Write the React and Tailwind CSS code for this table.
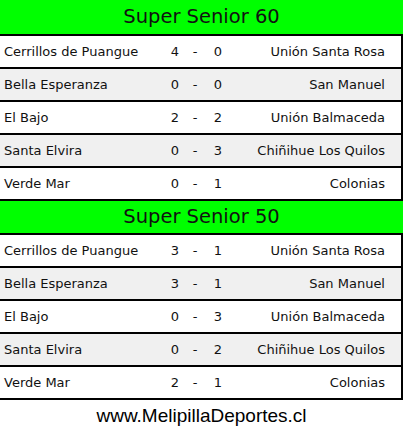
import React from "react";

const sections = [
  {
    title: "Super Senior 60",
    h: "h-[36px]",
    rows: [
      ["Cerrillos de Puangue", "4", "0", "Unión Santa Rosa"],
      ["Bella Esperanza", "0", "0", "San Manuel"],
      ["El Bajo", "2", "2", "Unión Balmaceda"],
      ["Santa Elvira", "0", "3", "Chiñihue Los Quilos"],
      ["Verde Mar", "0", "1", "Colonias"],
    ],
  },
  {
    title: "Super Senior 50",
    h: "h-[34px]",
    rows: [
      ["Cerrillos de Puangue", "3", "1", "Unión Santa Rosa"],
      ["Bella Esperanza", "3", "1", "San Manuel"],
      ["El Bajo", "0", "3", "Unión Balmaceda"],
      ["Santa Elvira", "0", "2", "Chiñihue Los Quilos"],
      ["Verde Mar", "2", "1", "Colonias"],
    ],
  },
];

export default function App() {
  return (
    <div className="w-[403px] h-[432px] bg-white text-[#111] flex flex-col">
      {sections.map((s) => (
        <div key={s.title} className="flex flex-col">
          <div
            className={`${s.h} bg-[#00ff00] border-b-2 border-black flex items-center justify-center text-[19.5px] font-['DejaVu_Sans',sans-serif]`}
          >
            {s.title}
          </div>
          {s.rows.map((r, i) => (
            <div
              key={i}
              className={`h-[33px] border-b-2 border-r-2 border-black flex items-center text-[13px] font-['DejaVu_Sans',sans-serif] ${
                i % 2 === 1 ? "bg-[#f0f0f0]" : "bg-white"
              }`}
            >
              <div className="w-[168px] pl-1">{r[0]}</div>
              <div className="w-[14px] text-center">{r[1]}</div>
              <div className="w-[26px] text-center">-</div>
              <div className="w-[20px] text-center">{r[2]}</div>
              <div className="flex-1 text-right pr-[16px]">{r[3]}</div>
            </div>
          ))}
        </div>
      ))}
      <div className="flex-1 flex items-center justify-center text-[19px] font-['Liberation_Sans',sans-serif] text-black">
        www.MelipillaDeportes.cl
      </div>
    </div>
  );
}
